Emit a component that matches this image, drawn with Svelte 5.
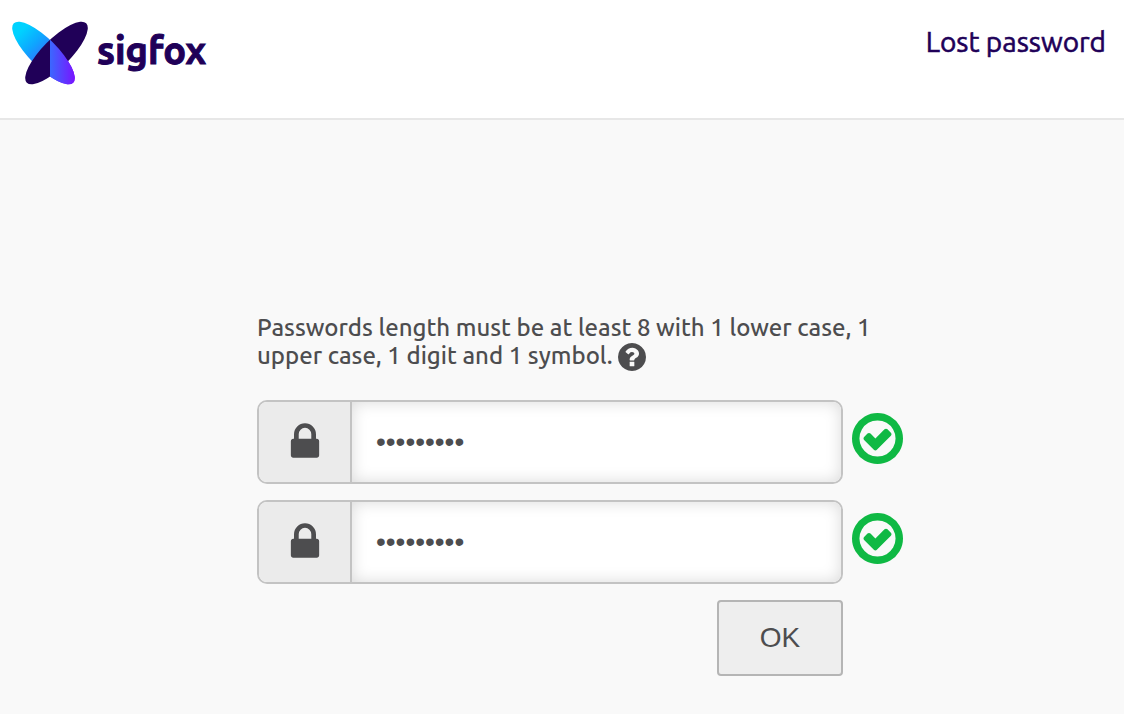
<script>
  let fields = $state([
    { id: 'new-password', label: 'New password', value: 'Abcdef1!x' },
    { id: 'confirm-password', label: 'Confirm password', value: 'Abcdef1!x' }
  ]);

  function submit(event) {
    event.preventDefault();
  }
</script>

<header>
  <a class="brand" href="/">
    <svg class="mark" viewBox="12 21 76 64" aria-hidden="true">
      <defs>
        <linearGradient id="wing" gradientUnits="userSpaceOnUse" x1="12" y1="0" x2="76" y2="0">
          <stop offset="0" stop-color="#00d2ff" />
          <stop offset="0.3" stop-color="#0fa4ff" />
          <stop offset="0.62" stop-color="#3f62ff" />
          <stop offset="1" stop-color="#7c10ff" />
        </linearGradient>
        <clipPath id="right-half">
          <rect x="50" y="20" width="40" height="66" />
        </clipPath>
        <clipPath id="lower-right">
          <ellipse cx="43.5" cy="53" rx="42" ry="14" transform="rotate(45 43.5 53)" />
        </clipPath>
      </defs>
      <ellipse cx="43.5" cy="53" rx="42" ry="14" transform="rotate(45 43.5 53)" fill="url(#wing)" />
      <ellipse cx="56.5" cy="53" rx="42" ry="14" transform="rotate(-45 56.5 53)" fill="#200058" />
      <g clip-path="url(#right-half)">
        <rect x="50" y="20" width="40" height="66" fill="url(#wing)" clip-path="url(#lower-right)" />
      </g>
    </svg>
    <span class="name">sigfox</span>
  </a>
  <a class="lost" href="/lost-password">Lost password</a>
</header>

<main>
  <form onsubmit={submit}>
    <p>
      Passwords length must be at least 8 with 1 lower case, 1<br />
      upper case, 1 digit and 1 symbol.
      <svg class="help" viewBox="128 128 1536 1536" aria-hidden="true">
        <path d="M1024 1376v-192q0-14-9-23t-23-9h-192q-14 0-23 9t-9 23v192q0 14 9 23t23 9h192q14 0 23-9t9-23zm256-672q0-88-55.500-163t-138.500-116-170-41q-243 0-371 213-15 24 8 42l132 100q7 6 19 6 16 0 25-12 53-68 86-92 34-24 86-24 48 0 85.500 26t37.500 59q0 38-20 61t-68 45q-63 28-115.500 86.500t-52.500 125.500v36q0 14 9 23t23 9h192q14 0 23-9t9-23q0-19 21.500-49.500t54.500-49.500q32-18 49-28.500t46-35 44.500-48 28-60.500 12.500-81zm384 192q0 209-103 385.500t-279.500 279.500-385.500 103-385.500-103-279.500-279.500-103-385.500 103-385.500 279.500-279.500 385.500-103 385.500 103 279.500 279.500 103 385.500z" />
      </svg>
    </p>

    {#each fields as field (field.id)}
      <div class="row">
        <div class="group">
          <label for={field.id} aria-label={field.label}>
            <svg class="lock" viewBox="0 0 1792 1792" aria-hidden="true">
              <path d="M640 768h512v-192q0-106-75-181t-181-75-181 75-75 181v192zm832 96v576q0 40-28 68t-68 28h-960q-40 0-68-28t-28-68v-576q0-40 28-68t68-28h32v-192q0-184 132-316t316-132 316 132 132 316v192h32q40 0 68 28t28 68z" />
            </svg>
          </label>
          <input id={field.id} type="password" autocomplete="new-password" bind:value={field.value} />
        </div>
        <svg class="check" viewBox="128 128 1536 1536" aria-hidden="true">
          <path d="M1299 813l-422 422q-19 19-45 19t-45-19l-294-294q-19-19-19-45t19-45l102-102q19-19 45-19t45 19l147 147 275-275q19-19 45-19t45 19l102 102q19 19 19 45t-19 45zm141 83q0-148-73-273t-198-198-273-73-273 73-198 198-73 273 73 273 198 198 273 73 273-73 198-198 73-273zm224 0q0 209-103 385.500t-279.500 279.500-385.500 103-385.500-103-279.500-279.500-103-385.500 103-385.500 279.500-279.500 385.500-103 385.500 103 279.500 279.500 103 385.500z" />
        </svg>
      </div>
    {/each}

    <div class="actions">
      <button type="submit">OK</button>
    </div>
  </form>
</main>

<style>
  :global(body) {
    background: #f9f9f9;
    color: #4d4d4f;
    font-family: Ubuntu, "Noto Sans", sans-serif;
  }

  header {
    display: flex;
    justify-content: space-between;
    align-items: flex-start;
    min-height: 97px;
    padding: 21px 18px 0 12px;
    background: #fff;
    border-bottom: 2px solid #e7e7e7;
  }

  a {
    color: #200058;
    text-decoration: none;
  }

  .brand {
    display: flex;
    gap: 9px;
  }

  .mark {
    width: 76px;
    height: 64px;
  }

  .name {
    font-size: 38px;
    font-weight: 700;
    line-height: 58px;
    -webkit-text-stroke: 1px currentColor;
  }

  .lost {
    font-size: 28px;
    line-height: 42px;
    -webkit-text-stroke: 1px currentColor;
    -webkit-text-stroke-width: thin;
  }

  main {
    padding: 194px 0 38px 36px;
  }

  form {
    display: flex;
    flex-direction: column;
    gap: 16px;
    max-width: 646px;
    margin: 0 auto;
  }

  p {
    margin: 0 0 14px;
    font-size: 24px;
    font-weight: 500;
    line-height: 28px;
    white-space: nowrap;
  }

  svg {
    flex: none;
    fill: currentColor;
  }

  .help {
    width: 28px;
    height: 28px;
    margin: -4px 0;
    vertical-align: -3px;
  }

  .row {
    display: flex;
    align-items: flex-start;
    gap: 9px;
  }

  .group {
    display: flex;
    flex: 1;
    box-sizing: border-box;
    height: 84px;
    overflow: hidden;
    background: #fff;
    border: 2px solid #c3c3c3;
    border-radius: 10px;
  }

  label {
    display: flex;
    align-items: center;
    justify-content: center;
    width: 91px;
    background: #ebebeb;
    border-right: 2px solid #c3c3c3;
  }

  .lock {
    width: 44px;
    height: 44px;
  }

  input {
    flex: 1;
    min-width: 0;
    padding: 0 24px;
    border: 0;
    border-radius: 0 8px 8px 0;
    outline: 0;
    background: #fff;
    box-shadow: inset 0 0 16px rgba(0, 0, 0, 0.15);
    color: #4d4d4f;
    font: 28px "Liberation Sans", Arial, sans-serif;
  }

  .check {
    width: 51px;
    height: 51px;
    margin-top: 13px;
    color: #0fb944;
  }

  .actions {
    display: flex;
    justify-content: flex-end;
    padding-right: 60px;
  }

  button {
    width: 126px;
    height: 76px;
    background: #eee;
    border: 2px solid #b5b5b5;
    border-radius: 4px;
    color: #4d4d4f;
    font: 28px "Liberation Sans", Arial, sans-serif;
  }
</style>
